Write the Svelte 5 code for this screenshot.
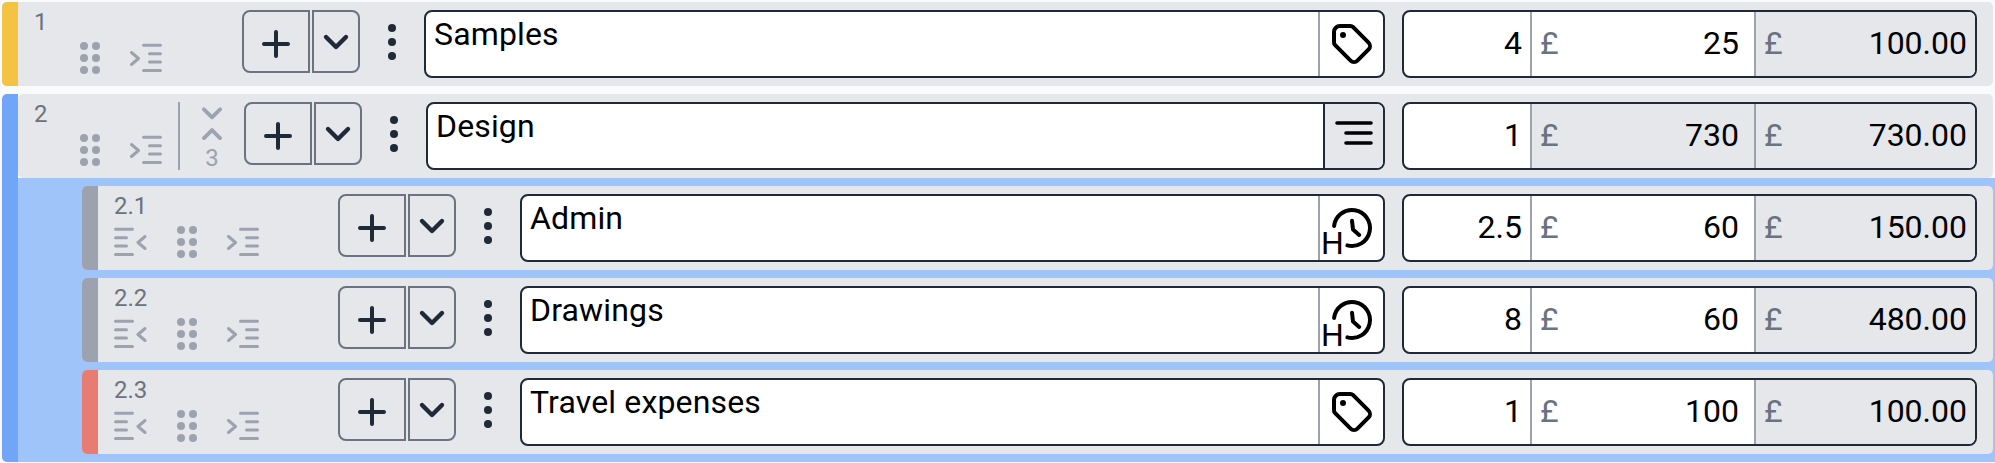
<script>
  const samples = { no: '1', title: 'Samples', qty: '4', rate: '25', total: '100.00' };
  const design = { no: '2', title: 'Design', qty: '1', rate: '730', total: '730.00', count: 3 };
  const children = [
    { no: '2.1', title: 'Admin', kind: 'labour', icon: 'history', qty: '2.5', rate: '60', total: '150.00' },
    { no: '2.2', title: 'Drawings', kind: 'labour', icon: 'history', qty: '8', rate: '60', total: '480.00' },
    { no: '2.3', title: 'Travel expenses', kind: 'expense', icon: 'tag', qty: '1', rate: '100', total: '100.00' }
  ];
</script>

{#snippet drag()}
  <svg width="24" height="32" viewBox="0 0 24 32" fill="#9ca3af">
    <circle cx="6" cy="4" r="4" /><circle cx="18" cy="4" r="4" />
    <circle cx="6" cy="16" r="4" /><circle cx="18" cy="16" r="4" />
    <circle cx="6" cy="28" r="4" /><circle cx="18" cy="28" r="4" />
  </svg>
{/snippet}

{#snippet indent()}
  <svg width="34" height="32" viewBox="0 0 34 32" fill="none" stroke="#9ca3af" stroke-width="3" stroke-linecap="round" stroke-linejoin="round">
    <path d="M13.5 3.3H30.5M19.5 11.7H30.5M19.5 20H30.5M13.5 28.4H30.5" />
    <path d="M1.5 10.5l7 6-7 6" />
  </svg>
{/snippet}

{#snippet outdent()}
  <svg width="34" height="32" viewBox="0 0 34 32" fill="none" stroke="#9ca3af" stroke-width="3" stroke-linecap="round" stroke-linejoin="round">
    <path d="M2.5 3.3H19.5M2.5 11.7H13.5M2.5 20H13.5M2.5 28.4H19.5" />
    <path d="M32 10.5l-7 6 7 6" />
  </svg>
{/snippet}

{#snippet actions()}
  <div class="actions">
    <button class="add" aria-label="Add">
      <svg width="32" height="32" viewBox="0 0 32 32" fill="none" stroke="#1f2937" stroke-width="4" stroke-linecap="round"><path d="M16 4V28M4 16H28" /></svg>
    </button>
    <button class="more" aria-label="More">
      <svg width="28" height="20" viewBox="0 0 28 20" fill="none" stroke="#1f2937" stroke-width="4.4" stroke-linecap="round" stroke-linejoin="round"><path d="M4 5l10 10L24 5" /></svg>
    </button>
  </div>
  <div class="kebab"><i></i><i></i><i></i></div>
{/snippet}

{#snippet tagIcon()}
  <svg width="48" height="48" viewBox="0 0 24 24" fill="none" stroke="#000" stroke-width="2" stroke-linecap="round" stroke-linejoin="round">
    <path d="M7.5 7.5m-.5 0a.5 .5 0 1 0 1 0a.5 .5 0 1 0 -1 0" />
    <path d="M3 6v5.172a2 2 0 0 0 .586 1.414l7.71 7.71a2.41 2.41 0 0 0 3.408 0l5.592 -5.592a2.41 2.41 0 0 0 0 -3.408l-7.71 -7.71a2 2 0 0 0 -1.414 -.586h-5.172a3 3 0 0 0 -3 3z" />
  </svg>
{/snippet}

{#snippet historyIcon()}
  <svg width="48" height="48" viewBox="0 0 24 24" fill="none" stroke="#000" stroke-width="2" stroke-linecap="round" stroke-linejoin="round">
    <path d="M3.05 11A9 9 0 1 1 9.67 20.7" />
    <path d="M12 8.4L12.5 12.8L15.6 15.5" />
  </svg>
  <span class="hours">H</span>
{/snippet}

{#snippet figures(item, rateLocked)}
  <div class="figures">
    <div class="qty">{item.qty}</div>
    <div class="money rate" class:locked={rateLocked}><span>£</span>{item.rate}</div>
    <div class="money total locked"><span>£</span>{item.total}</div>
  </div>
{/snippet}

<div class="list">
  <div class="row">
    <div class="strip yellow"></div>
    <div class="handle top-handle">
      <div class="grab">
        <div class="no">{samples.no}</div>
        <div class="tools">{@render drag()}{@render indent()}</div>
      </div>
    </div>
    {@render actions()}
    <div class="title">
      <div class="text">{samples.title}</div>
      <div class="type">{@render tagIcon()}</div>
    </div>
    {@render figures(samples, false)}
  </div>

  <div class="group">
    <div class="strip blue"></div>
    <div class="group-body">
      <div class="row">
        <div class="handle parent-handle">
          <div class="grab">
            <div class="no">{design.no}</div>
            <div class="tools">{@render drag()}{@render indent()}</div>
          </div>
          <div class="collapse">
            <svg width="24" height="36" viewBox="0 0 24 36" fill="none" stroke="#9ca3af" stroke-width="4" stroke-linecap="round" stroke-linejoin="round">
              <path d="M3.5 3.5L12 12L20.5 3.5M3.5 34L12 25.5L20.5 34" />
            </svg>
            <span>{design.count}</span>
          </div>
        </div>
        {@render actions()}
        <div class="title">
          <div class="text">{design.title}</div>
          <div class="type summary">
            <svg width="38" height="26" viewBox="0 0 38 26" fill="none" stroke="#000" stroke-width="3.6" stroke-linecap="round"><path d="M2 3H36M11 13H36M11 23H36" /></svg>
          </div>
        </div>
        {@render figures(design, true)}
      </div>

      <div class="children">
        {#each children as child}
          <div class="row">
            <div class="strip {child.kind}"></div>
            <div class="handle child-handle">
              <div class="no">{child.no}</div>
              <div class="tools">{@render outdent()}{@render drag()}{@render indent()}</div>
            </div>
            {@render actions()}
            <div class="title">
              <div class="text">{child.title}</div>
              <div class="type">
                {#if child.icon === 'history'}{@render historyIcon()}{:else}{@render tagIcon()}{/if}
              </div>
            </div>
            {@render figures(child, false)}
          </div>
        {/each}
      </div>
    </div>
  </div>
</div>

<style>
  :global(body) {
    background: #f9fafb;
    font-family: Roboto, "Noto Sans", sans-serif;
  }

  .list {
    display: flex;
    flex-direction: column;
    gap: 8px;
    padding: 2px 0 0 2px;
  }

  .row {
    display: flex;
    align-items: flex-start;
    height: 84px;
    margin-right: 2px;
    padding-right: 16px;
    background: #e5e7eb;
    border-radius: 5px;
    overflow: hidden;
  }

  /* kleur per regeltype */
  .strip { flex: none; width: 16px; align-self: stretch; }
  .yellow { background: #f4c343; }
  .blue { background: #70a5f8; border-radius: 5px 0 0 5px; }
  .labour { background: #9ca3af; }
  .expense { background: #e87c72; }

  .group { display: flex; }
  .group-body { flex: 1; min-width: 0; }

  .children {
    display: flex;
    flex-direction: column;
    gap: 8px;
    padding: 8px 0 8px 64px;
    background: #9fc4fa;
  }

  .handle { flex: none; display: flex; box-sizing: border-box; }
  .top-handle { width: 224px; padding-left: 16px; }
  .parent-handle { width: 226px; padding-left: 16px; }
  .child-handle { width: 240px; padding-left: 15px; flex-direction: column; }

  .no {
    height: 40px;
    padding-top: 6px;
    box-sizing: border-box;
    font-size: 24px;
    line-height: 28px;
    color: #6b7280;
  }

  .child-handle .no { padding-left: 1px; }

  .tools { display: flex; gap: 28px; height: 32px; }
  .grab { flex: none; width: 130px; }
  .grab .tools { margin-left: 44px; }

  .collapse {
    flex: none;
    width: 64px;
    height: 64px;
    margin: 8px 0 0 14px;
    border-left: 2px solid #9ca3af;
    display: flex;
    flex-direction: column;
    align-items: center;
    padding-top: 4px;
    color: #9ca3af;
    font-size: 24px;
    line-height: 24px;
  }

  .collapse span { margin-top: 6px; }

  .actions {
    flex: none;
    display: flex;
    gap: 2px;
    width: 118px;
    height: 63px;
    margin-top: 8px;
  }

  .actions button {
    display: flex;
    align-items: center;
    justify-content: center;
    padding: 0;
    background: transparent;
    border: 2px solid #6b7280;
  }

  .add { flex: 1; border-radius: 8px 0 0 8px; }
  .add svg { margin-top: 5px; }
  .more { width: 48px; border-radius: 0 8px 8px 0; }

  .kebab {
    flex: none;
    width: 64px;
    height: 63px;
    margin-top: 8px;
    display: flex;
    flex-direction: column;
    align-items: center;
    gap: 6px;
    padding-top: 14px;
    box-sizing: border-box;
  }

  .kebab i { width: 8px; height: 8px; border-radius: 50%; background: #1f2937; }

  .title {
    flex: 1;
    min-width: 0;
    display: flex;
    height: 68px;
    margin-top: 8px;
    box-sizing: border-box;
    background: #fff;
    border: 2.67px solid #1f2937;
    border-radius: 8px;
    overflow: hidden;
  }

  .text {
    flex: 1;
    padding: 0 8px;
    font-size: 32px;
    letter-spacing: 0.15px;
    line-height: 44px;
    color: #000;
  }

  .type {
    position: relative;
    flex: none;
    width: 65px;
    box-sizing: border-box;
    display: flex;
    align-items: center;
    justify-content: center;
    border-left: 2px solid #9ca3af;
  }

  .summary {
    width: 60px;
    background: #e5e7eb;
    border-left-color: #1f2937;
  }

  .summary svg { margin-top: -6px; }

  .hours {
    position: absolute;
    left: 1px;
    bottom: -1px;
    font-size: 32px;
    line-height: 36px;
    color: #000;
  }

  .figures {
    flex: none;
    display: flex;
    width: 575px;
    height: 68px;
    margin: 8px 0 0 17px;
    box-sizing: border-box;
    background: #fff;
    border: 2.67px solid #1f2937;
    border-radius: 8px;
    overflow: hidden;
    font-size: 32px;
    line-height: 62px;
    color: #000;
    text-align: right;
  }

  .qty { width: 126px; padding-right: 8px; box-sizing: border-box; }

  .money {
    display: flex;
    justify-content: space-between;
    box-sizing: border-box;
    border-left: 2px solid #9ca3af;
    padding-left: 8px;
  }

  .money span { color: #6b7280; }
  .rate { width: 224px; padding-right: 15px; }
  .total { flex: 1; padding-right: 8px; }
  .locked { background: #e5e7eb; }
</style>
